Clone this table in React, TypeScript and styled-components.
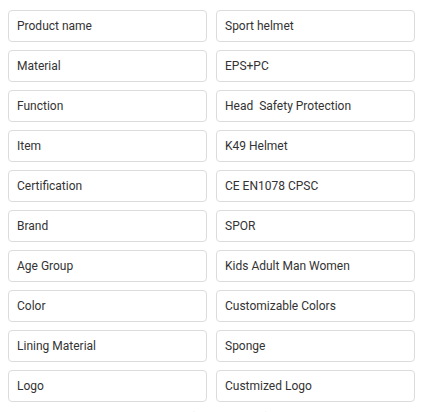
import React from "react";
import styled, { createGlobalStyle } from "styled-components";

const Global = createGlobalStyle`
  html, body { margin: 0; padding: 0; background: #fff; }
  body { font-family: Roboto, "Noto Sans", "Noto Sans CJK SC", sans-serif; }
`;

const Page = styled.div`
  padding: 10px 6px 0 8px;
`;

const Grid = styled.div`
  display: grid;
  grid-template-columns: 199px 199px;
  column-gap: 9px;
  row-gap: 8px;
`;

const Cell = styled.div`
  box-sizing: border-box;
  height: 32px;
  border: 1px solid #dcdcdc;
  border-radius: 4px;
  padding: 0 8px;
  display: flex;
  align-items: center;
  font-size: 12px;
  color: #333;
  white-space: pre;
`;

const Note = styled.div`
  margin-top: 8px;
  font-size: 12px;
  line-height: 16px;
  color: #999;
  font-family: "Noto Sans CJK SC", sans-serif;
`;

const rows: [string, string][] = [
  ["Product name", "Sport helmet"],
  ["Material", "EPS+PC"],
  ["Function", "Head  Safety Protection"],
  ["Item", "K49 Helmet"],
  ["Certification", "CE EN1078 CPSC"],
  ["Brand", "SPOR"],
  ["Age Group", "Kids Adult Man Women"],
  ["Color", "Customizable Colors"],
  ["Lining Material", "Sponge"],
  ["Logo", "Custmized Logo"],
];

export default function App() {
  return (
    <Page>
      <Global />
      <Grid>
        {rows.map(([k, v]) => (
          <React.Fragment key={k}>
            <Cell>{k}</Cell>
            <Cell>{v}</Cell>
          </React.Fragment>
        ))}
      </Grid>
      <Note>温馨提示：图片仅供参考，颜色以实物为准，可定制。</Note>
    </Page>
  );
}
